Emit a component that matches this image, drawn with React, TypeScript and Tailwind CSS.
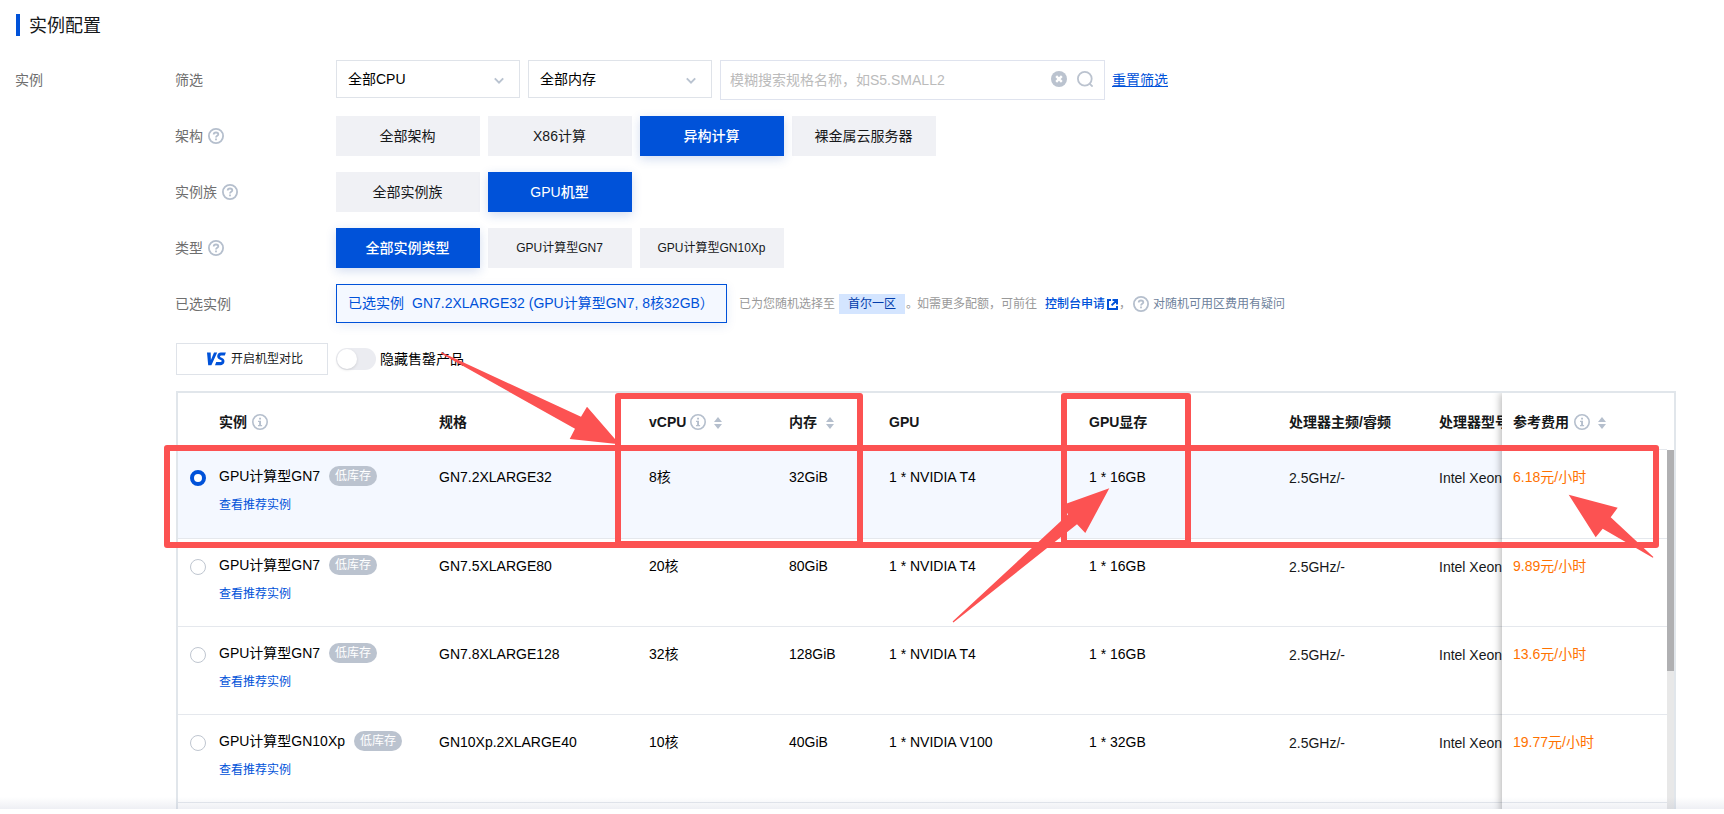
import React from "react";

const cx = (...c: (string | false | undefined)[]) => c.filter(Boolean).join(" ");

function HelpIcon({ className }: { className?: string }) {
  return (
    <svg viewBox="0 0 16 16" className={cx("h-4 w-4 shrink-0", className)} fill="none">
      <circle cx="8" cy="8" r="7.1" stroke="#b5bfcd" strokeWidth="1.8" />
      <path d="M5.7 6.6c0-1.3 1-2.1 2.3-2.1s2.3.8 2.3 1.9c0 1.4-2.3 1.5-2.3 3.1" stroke="#b5bfcd" strokeWidth="1.8" />
      <rect x="7.1" y="10.5" width="1.8" height="1.8" fill="#b5bfcd" />
    </svg>
  );
}

function InfoIcon() {
  return (
    <svg viewBox="0 0 16 16" className="h-4 w-4 shrink-0" fill="none">
      <circle cx="8" cy="8" r="7.2" stroke="#b5bfcd" strokeWidth="1.6" />
      <path d="M7.1 3.8h1.9v1.7H7.1zM6 6.7h3v4.2h1.1v1.3H6v-1.3h1.1V8H6z" fill="#b5bfcd" />
    </svg>
  );
}

function SortIcon({ className }: { className?: string }) {
  return (
    <svg viewBox="0 0 8 12" className={cx("mt-0.5 h-3 w-2 shrink-0", className)} fill="#b5bfcd">
      <path d="M4 0l4 5H0zM4 12l4-5H0z" />
    </svg>
  );
}

function Select({ label }: { label: string }) {
  return (
    <div className="flex h-[38px] w-[184px] items-center justify-between border border-[#dfe3e9] pr-[15px] pl-[11px] text-black">
      <span>{label}</span>
      <svg viewBox="0 0 10 8" className="mt-1 h-2 w-2.5" fill="none">
        <path d="M.8 1.3L5 5.7l4.2-4.4" stroke="#b9c3d0" strokeWidth="1.9" />
      </svg>
    </div>
  );
}

function Option({ label, active, small }: { label: string; active?: boolean; small?: boolean }) {
  return (
    <div
      className={cx(
        "flex h-10 w-36 items-center justify-center pr-px",
        small && "text-xs",
        active
          ? "relative bg-[#0052d9] font-medium text-white shadow-[0_3px_10px_rgba(30,80,180,0.2)]"
          : "bg-[#f0f1f5] text-[#16181a]"
      )}
    >
      {label}
    </div>
  );
}

function Row({ label, help, children }: { label: string; help?: boolean; children: React.ReactNode }) {
  return (
    <div className="flex h-10">
      <div className="-ml-px flex h-10 w-[161px] items-center text-[#6f6f6f]">
        {label}
        {help && <HelpIcon className="ml-[5px]" />}
      </div>
      <div className="flex gap-2">{children}</div>
    </div>
  );
}

type Instance = { name: string; spec: string; cpu: string; mem: string; gpu: string; vram: string; price: string; selected?: boolean };

const instances: Instance[] = [
  { name: "GPU计算型GN7", spec: "GN7.2XLARGE32", cpu: "8核", mem: "32GiB", gpu: "1 * NVIDIA T4", vram: "1 * 16GB", price: "6.18元/小时", selected: true },
  { name: "GPU计算型GN7", spec: "GN7.5XLARGE80", cpu: "20核", mem: "80GiB", gpu: "1 * NVIDIA T4", vram: "1 * 16GB", price: "9.89元/小时" },
  { name: "GPU计算型GN7", spec: "GN7.8XLARGE128", cpu: "32核", mem: "128GiB", gpu: "1 * NVIDIA T4", vram: "1 * 16GB", price: "13.6元/小时" },
  { name: "GPU计算型GN10Xp", spec: "GN10Xp.2XLARGE40", cpu: "10核", mem: "40GiB", gpu: "1 * NVIDIA V100", vram: "1 * 32GB", price: "19.77元/小时" },
];

const columns = "grid w-[1324px] grid-cols-[41px_220px_210px_140px_100px_200px_200px_150px_63px]";

function InstanceRow({ item }: { item: Instance }) {
  return (
    <div className={cx(columns, "border-b border-[#e5e8ed] pt-4 leading-[22px] text-black", item.selected ? "h-[89px] bg-[#f4f8ff]" : "h-[88px]")}>
      <div className="pt-1 pl-3">
        <div className={cx("h-4 w-4 rounded-full bg-white", item.selected ? "border-4 border-[#0052d9]" : "border border-[#bfc6d0]")} />
      </div>
      <div>
        <div className="-mt-px flex items-center">
          {item.name}
          <span className="ml-[9px] flex h-5 w-12 items-center justify-center rounded-full bg-[#bbc3cf] pb-px text-xs text-white">低库存</span>
        </div>
        <div className="mt-[7px] text-xs leading-[22px] text-[#0052d9]">查看推荐实例</div>
      </div>
      <div>{item.spec}</div>
      <div>{item.cpu}</div>
      <div>{item.mem}</div>
      <div>{item.gpu}</div>
      <div>{item.vram}</div>
      <div className="pt-px text-[#16181a]">2.5GHz/-</div>
      <div className="pt-px whitespace-nowrap text-[#16181a]">Intel Xeon</div>
    </div>
  );
}

function Annotations() {
  return (
    <svg viewBox="0 0 1724 814" className="pointer-events-none absolute top-0 left-0 z-30 h-[814px] w-[1724px]">
      <g fill="none" stroke="#fc5252" strokeWidth="6" strokeLinejoin="round">
        <rect x="167" y="448" width="1489" height="97" />
        <rect x="618" y="396" width="242" height="148" />
        <rect x="1064" y="396" width="124" height="147" />
      </g>
      <g fill="#fc5252">
        <path d="M441.5 352.3L581 416.7L587 406.7L619.5 444.3L569.7 439L575 428.7L440.8 353.6Z" />
        <path d="M952.6 621.6L1068 514.5L1062.5 505L1109.3 488.3L1085.3 533L1077 524.3L953.4 622.5Z" />
        <path d="M1568.7 494.7L1617.7 507.7L1610.7 517.3L1653.4 557L1652.8 557.8L1602.7 528.7L1595.7 537.3Z" />
      </g>
    </svg>
  );
}

export default function App() {
  return (
    <div className="relative h-[814px] w-[1724px] overflow-hidden bg-white font-['Liberation_Sans','Noto_Sans_CJK_SC',sans-serif] text-sm">
      <div className="flex h-[809px] flex-col overflow-hidden">
        <h2 className="mt-3.5 ml-4 flex h-[22px] shrink-0 items-center border-l-4 border-[#0052d9] pt-0.5 pl-[9px] text-lg text-[#16181a]">
          实例配置
        </h2>

        <div className="mt-6 flex pl-4">
          <div className="-ml-px flex h-10 w-[161px] items-center text-[#6f6f6f]">实例</div>
          <div className="flex flex-col">
            <div className="flex flex-col gap-4">
              <Row label="筛选">
                <Select label="全部CPU" />
                <Select label="全部内存" />
                <div className="flex h-10 w-[385px] items-center border border-[#dfe3ee] pr-[11px] pl-[9px]">
                  <span className="grow text-[#bbbbbb]">模糊搜索规格名称，如S5.SMALL2</span>
                  <svg viewBox="0 0 16 16" className="-mt-0.5 h-4 w-4">
                    <circle cx="8" cy="8" r="8" fill="#bbc3cf" />
                    <path d="M5.2 5.2l5.6 5.6M10.8 5.2l-5.6 5.6" stroke="#fff" strokeWidth="2.4" />
                  </svg>
                  <svg viewBox="0 0 16 16" className="-mt-0.5 ml-2.5 h-4 w-4" fill="none" stroke="#bbc3cf" strokeWidth="1.8">
                    <circle cx="7.8" cy="7.8" r="6.9" />
                    <path d="M12.3 12.3l3.3 3.3" />
                  </svg>
                </div>
                <div className="-ml-px flex h-10 items-center text-[#0052d9] underline">重置筛选</div>
              </Row>
              <Row label="架构" help>
                <Option label="全部架构" />
                <Option label="X86计算" />
                <Option label="异构计算" active />
                <Option label="裸金属云服务器" />
              </Row>
              <Row label="实例族" help>
                <Option label="全部实例族" />
                <Option label="GPU机型" active />
              </Row>
              <Row label="类型" help>
                <Option label="全部实例类型" active />
                <Option label="GPU计算型GN7" small />
                <Option label="GPU计算型GN10Xp" small />
              </Row>
              <Row label="已选实例">
                <div className="flex h-[39px] w-[391px] items-center border border-[#0052d9] bg-[#f4f8ff] pb-px pl-[11px] whitespace-pre text-[#0052d9] shadow-[0_3px_10px_rgba(30,80,180,0.1)]">
                  已选实例<span className="ml-2">GN7.2XLARGE32 (GPU计算型GN7, 8核32GB）</span>
                </div>
                <div className="ml-1 flex h-10 items-center text-xs text-[#999999]">
                  已为您随机选择至
                  <span className="mr-px ml-1 flex h-5 w-[66px] items-center justify-center bg-[#d4e5ff] text-[#003cab]">首尔一区</span>
                  <span className="w-[11px]">。</span>
                  如需更多配额，可前往
                  <span className="ml-2 flex items-center font-medium text-[#0052d9]">
                    控制台申请
                    <svg viewBox="0 0 11 11" className="ml-0.5 h-[11px] w-[11px]" fill="none" stroke="#0052d9" strokeWidth="2">
                      <path d="M4 1H1v9h9V7M5.5 1H10v4.5M10 1L4.6 6.4" />
                    </svg>
                  </span>
                  <span className="w-[15px] pl-px">，</span>
                  <HelpIcon />
                  <span className="ml-1 text-[#6e829c]">对随机可用区费用有疑问</span>
                </div>
              </Row>
            </div>

            <div className="mt-[19px] flex h-8 items-center">
              <div className="flex h-8 w-[152px] items-center border border-[#dfe3e9] pl-[30px] text-xs text-[#16181a]">
                <svg viewBox="0 0 19 14" className="mr-[5px] h-3.5 w-[19px] overflow-visible" fill="#0052d9">
                  <path d="M0 .5h3.7l.2 7.6L7 .5h3.2L4.4 13.2H1.2z" />
                  <path d="M18.9.5h-5.1c-3.7 0-4.9 5.3-1.7 6.8l2.2 1c.8.5.4 1.7-.6 1.7H9.2l-1.2 3.2h5.4c4.3 0 5.5-5.6 2.2-7l-2-.9c-.9-.4-.6-1.8.5-1.8h3.7z" />
                </svg>
                <span className="pb-px">开启机型对比</span>
              </div>
              <div className="ml-2 h-[22px] w-10 rounded-full bg-[#ebecf1] p-px">
                <div className="h-5 w-5 rounded-full bg-white shadow-[0_1px_3px_rgba(0,0,0,0.12)]" />
              </div>
              <span className="ml-1 text-black">隐藏售罄产品</span>
            </div>

            <div className="mt-4 h-[440px] w-[1500px] border-2 border-[#e1e6eb]">
              <div className="flex h-full">
                <div className="w-[1324px] shrink-0 overflow-hidden">
                  <div className={cx(columns, "h-[57px] items-center border-b border-[#e5e8ed] pt-px font-bold text-[#16181a]")}>
                    <div />
                    <div className="flex items-center gap-[5px]">实例<InfoIcon /></div>
                    <div>规格</div>
                    <div className="flex items-center gap-1">vCPU<InfoIcon /><SortIcon className="ml-1" /></div>
                    <div className="flex items-center gap-[9px]">内存<SortIcon /></div>
                    <div>GPU</div>
                    <div>GPU显存</div>
                    <div>处理器主频/睿频</div>
                    <div className="overflow-hidden whitespace-nowrap">处理器型号</div>
                  </div>
                  {instances.map((item) => (
                    <InstanceRow key={item.spec} item={item} />
                  ))}
                </div>
                <div className="z-10 w-[165px] shrink-0 bg-white shadow-[-1px_0_8px_rgba(0,0,0,0.32)] [clip-path:inset(0_0_0_-10px)]">
                  <div className="flex h-[57px] items-center gap-[5px] border-b border-[#e5e8ed] pt-px pl-[11px] font-bold text-[#16181a]">
                    参考费用<InfoIcon /><SortIcon className="ml-[3px]" />
                  </div>
                  {instances.map((item) => (
                    <div key={item.spec} className={cx("border-b border-[#e5e8ed] pt-4 pl-[11px] leading-[22px] text-[#ff7200]", item.selected ? "h-[89px]" : "h-[88px]")}>
                      {item.price}
                    </div>
                  ))}
                </div>
                <div className="mt-[57px] w-[7px] bg-[#e8e8e8]">
                  <div className="h-[221px] bg-[#b0b0b2]" />
                </div>
              </div>
            </div>
          </div>
        </div>
      </div>
      <div className="absolute top-[797px] left-0 z-20 h-3 w-full bg-linear-to-b from-transparent to-[#8c96b4]/15" />
      <Annotations />
    </div>
  );
}
